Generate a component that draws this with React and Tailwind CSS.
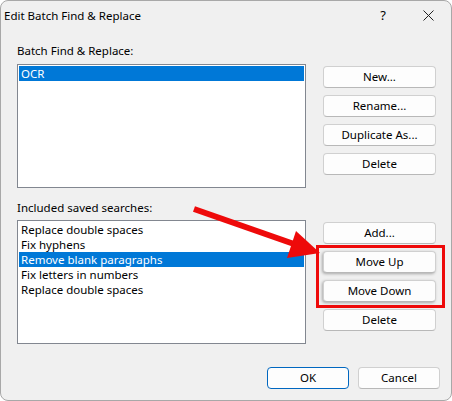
import React from "react";

const font = { fontFamily: '"Noto Sans", "Segoe UI", sans-serif' };

function Btn({ children, className = "" }) {
  return (
    <div
      className={
        "h-[22px] flex items-center justify-center rounded-[4px] border border-[#d0d0d0] border-b-[#b8b8b8] bg-[#fdfdfd] text-[11.5px] text-black leading-none " +
        className
      }
    >
      {children}
    </div>
  );
}

function Row({ children, selected }) {
  return (
    <div
      className={
        "h-[15px] pl-[2px] text-[11.5px] leading-[15px] whitespace-nowrap " +
        (selected ? "bg-[#0078d7] text-white" : "text-black")
      }
    >
      {children}
    </div>
  );
}

export default function App() {
  const searches = [
    "Replace double spaces",
    "Fix hyphens",
    "Remove blank paragraphs",
    "Fix letters in numbers",
    "Replace double spaces",
  ];

  return (
    <div className="w-[452px] h-[401px] bg-white" style={font}>
      <div className="relative w-[452px] h-[401px] rounded-[8px] border border-[#a8a8a8] bg-[#f0f0f0] overflow-hidden">
        {/* title bar */}
        <div className="h-[29px] flex items-center">
          <span className="ml-[3px] text-[11.5px] text-black leading-none">Edit Batch Find &amp; Replace</span>
          <span className="ml-auto text-[13px] text-black leading-none mr-[37px]">?</span>
          <svg width="11" height="11" viewBox="0 0 11 11" className="mr-[17px]">
            <path d="M0.5 0.5 L10.5 10.5 M10.5 0.5 L0.5 10.5" stroke="#222" strokeWidth="1" />
          </svg>
        </div>

        <div className="pl-[16px] pt-[13px]">
          {/* saved batch list */}
          <div className="flex">
            <div className="w-[289px]">
              <div className="h-[15px] text-[11.5px] leading-[15px] text-black">Batch Find &amp; Replace:</div>
              <div className="mt-[6px] h-[124px] border border-[#828790] bg-white p-[1px]">
                <Row selected>OCR</Row>
              </div>
            </div>
            <div className="ml-[17px] w-[113px] pt-[23px] flex flex-col gap-[7px]">
              <Btn>New...</Btn>
              <Btn>Rename...</Btn>
              <Btn>Duplicate As...</Btn>
              <Btn>Delete</Btn>
            </div>
          </div>

          {/* searches included in the batch */}
          <div className="flex mt-[12px]">
            <div className="w-[289px]">
              <div className="h-[15px] text-[11.5px] leading-[15px] text-black">Included saved searches:</div>
              <div className="mt-[5px] h-[124px] border border-[#828790] bg-white p-[1px]">
                {searches.map((s, i) => (
                  <Row key={i} selected={i === 2}>
                    {s}
                  </Row>
                ))}
              </div>
            </div>
            <div className="ml-[17px] w-[113px] pt-[22px] flex flex-col gap-[7px]">
              <Btn>Add...</Btn>
              <Btn className="shadow-[-1px_1px_3px_rgba(0,0,0,0.3)]">Move Up</Btn>
              <Btn className="shadow-[-1px_1px_3px_rgba(0,0,0,0.3)]">Move Down</Btn>
              <Btn>Delete</Btn>
            </div>
          </div>
        </div>

        {/* dialog buttons */}
        <div className="flex justify-end gap-[9px] mt-[23px] pr-[11px]">
          <Btn className="w-[82px] !border-[#0067c0]">OK</Btn>
          <Btn className="w-[82px]">Cancel</Btn>
        </div>

        {/* annotation: highlight box */}
        <div className="absolute left-[315px] top-[244px] w-[129px] h-[63px] border-[3px] border-[#ee0a0a] pointer-events-none" />

        {/* annotation: arrow */}
        <svg className="absolute left-0 top-0 pointer-events-none" width="452" height="401" viewBox="-1 -1 452 401">
          <line x1="192" y1="207" x2="292" y2="242" stroke="#ee0a0a" strokeWidth="6" />
          <polygon points="318,251 294,229 285,256" fill="#ee0a0a" />
        </svg>
      </div>
    </div>
  );
}
